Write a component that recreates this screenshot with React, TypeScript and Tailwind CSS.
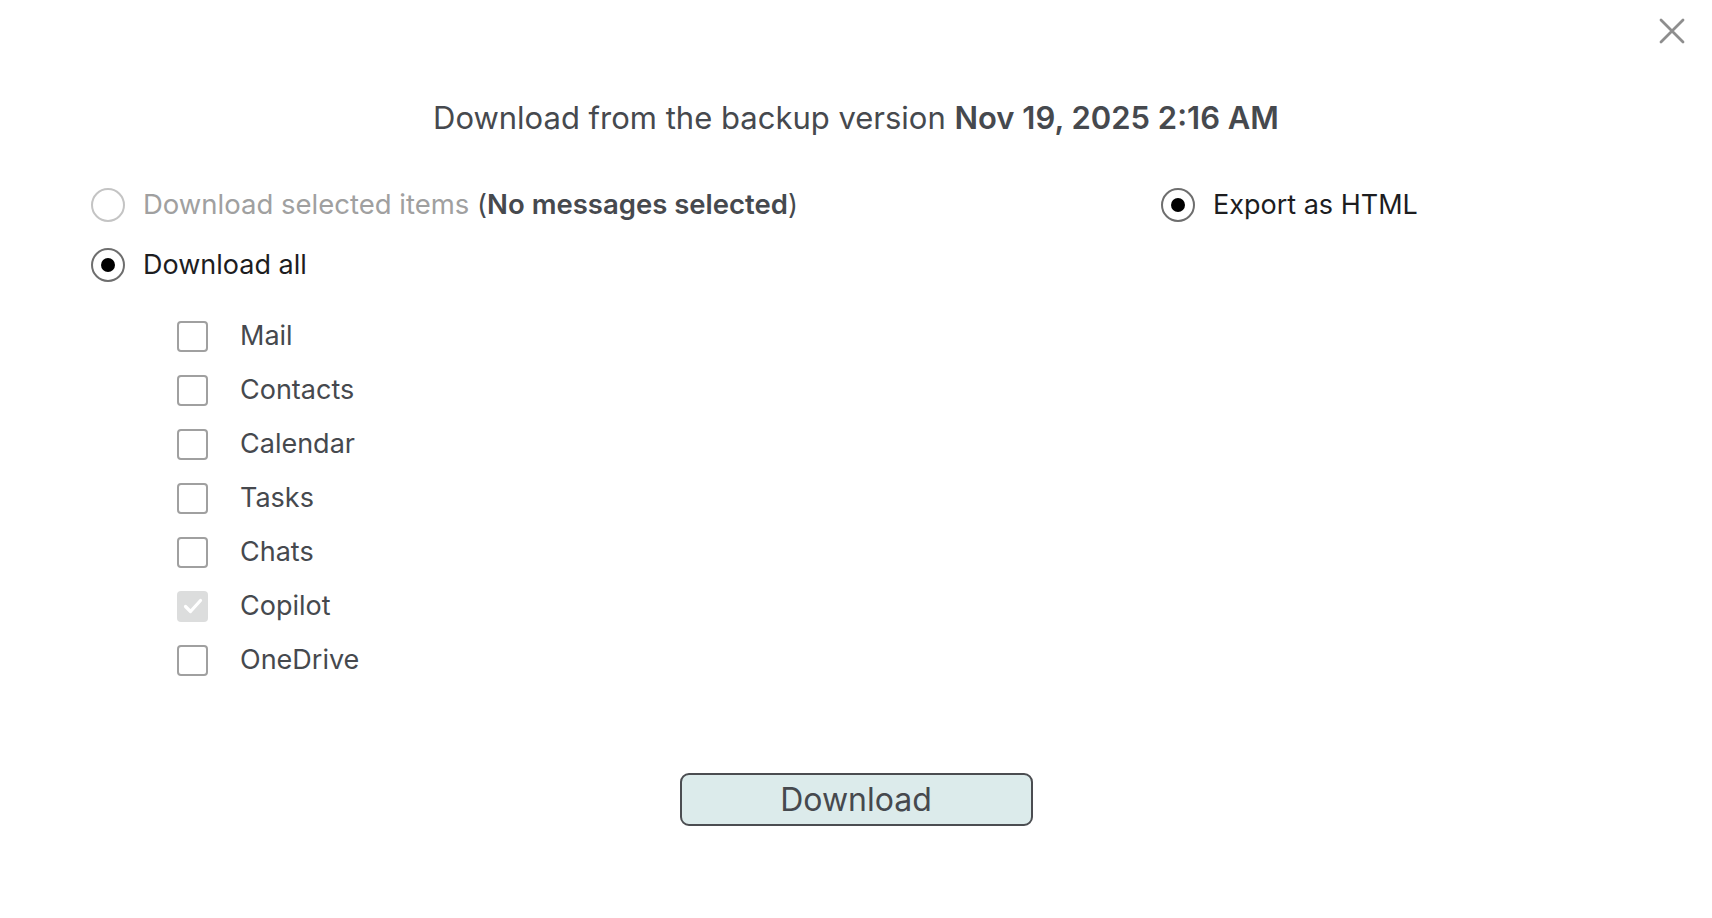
import { useState } from "react";

const items = ["Mail", "Contacts", "Calendar", "Tasks", "Chats", "Copilot", "OneDrive"];

function Radio({ checked, disabled }: { checked?: boolean; disabled?: boolean }) {
  return (
    <span
      className={
        "flex h-[34px] w-[34px] shrink-0 items-center justify-center rounded-full border-2 bg-white " +
        (disabled ? "border-[#c4c4c4]" : "border-[#6e6e6e]")
      }
    >
      {checked && <span className="h-[14px] w-[14px] rounded-full bg-black" />}
    </span>
  );
}

function Checkbox({ checked, disabled }: { checked?: boolean; disabled?: boolean }) {
  if (disabled) {
    return (
      <span className="flex h-[31px] w-[31px] shrink-0 items-center justify-center rounded-[4px] bg-[#dcdddd]">
        <svg width="24" height="24" viewBox="0 0 24 24" fill="none">
          <path d="M4.5 12.5l5 5 10-11" stroke="white" strokeWidth="3.2" strokeLinecap="round" strokeLinejoin="round" />
        </svg>
      </span>
    );
  }
  return (
    <span className="flex h-[31px] w-[31px] shrink-0 items-center justify-center rounded-[4px] border-2 border-[#a0a0a0] bg-white">
      {checked && (
        <svg width="24" height="24" viewBox="0 0 24 24" fill="none">
          <path d="M4.5 12.5l5 5 10-11" stroke="#333" strokeWidth="3.2" strokeLinecap="round" strokeLinejoin="round" />
        </svg>
      )}
    </span>
  );
}

export default function App() {
  const [mode, setMode] = useState<"all" | "selected">("all");
  const [checked, setChecked] = useState<Record<string, boolean>>({ Copilot: true });

  return (
    <div
      className="relative h-[918px] w-full bg-white text-[#46494e]"
      style={{ fontFamily: 'Inter, "Liberation Sans", sans-serif' }}
    >
      <button className="absolute right-[27px] top-[18px] text-[#8e8e8e]">
        <svg width="26" height="26" viewBox="0 0 26 26" fill="none">
          <path d="M2 2l22 22M24 2L2 24" stroke="currentColor" strokeWidth="2.8" strokeLinecap="round" />
        </svg>
      </button>

      <div className="pt-[99px] text-center text-[31px] leading-[38px]">
        Download from the backup version <span className="font-semibold">Nov 19, 2025 2:16 AM</span>
      </div>

      <div className="mt-[48px] flex pl-[91px]">
        <div className="w-[1070px]">
          <div className="flex h-[40px] items-center gap-[18px]">
            <Radio disabled />
            <span className="text-[27.5px] text-[#a0a0a0]">
              Download selected items{" "}
              <span className="font-semibold text-[#46494e]">
                <span className="font-normal">(</span>No messages selected<span className="font-normal">)</span>
              </span>
            </span>
          </div>

          <div
            className="mt-[20px] flex h-[40px] cursor-pointer items-center gap-[18px]"
            onClick={() => setMode("all")}
          >
            <Radio checked={mode === "all"} />
            <span className="text-[27px] text-[#1d1d1f]">Download all</span>
          </div>

          <div className="mt-[31px] flex flex-col gap-[14px] pl-[86px]">
            {items.map((name) => {
              const disabled = name === "Copilot";
              return (
                <div
                  key={name}
                  className="flex h-[40px] cursor-pointer items-center gap-[32px]"
                  onClick={() => !disabled && setChecked({ ...checked, [name]: !checked[name] })}
                >
                  <Checkbox checked={checked[name]} disabled={disabled} />
                  <span className="text-[27px]">{name}</span>
                </div>
              );
            })}
          </div>
        </div>

        <div className="flex h-[40px] items-center gap-[18px]">
          <Radio checked />
          <span className="text-[27px] text-[#1d1d1f]">Export as HTML</span>
        </div>
      </div>

      <div className="mt-[93px] flex justify-center">
        <button className="h-[53px] w-[353px] rounded-[9px] border-2 border-[#4b4d51] bg-[#dcebeb] text-[32px] leading-none text-[#46494e]">
          Download
        </button>
      </div>
    </div>
  );
}
